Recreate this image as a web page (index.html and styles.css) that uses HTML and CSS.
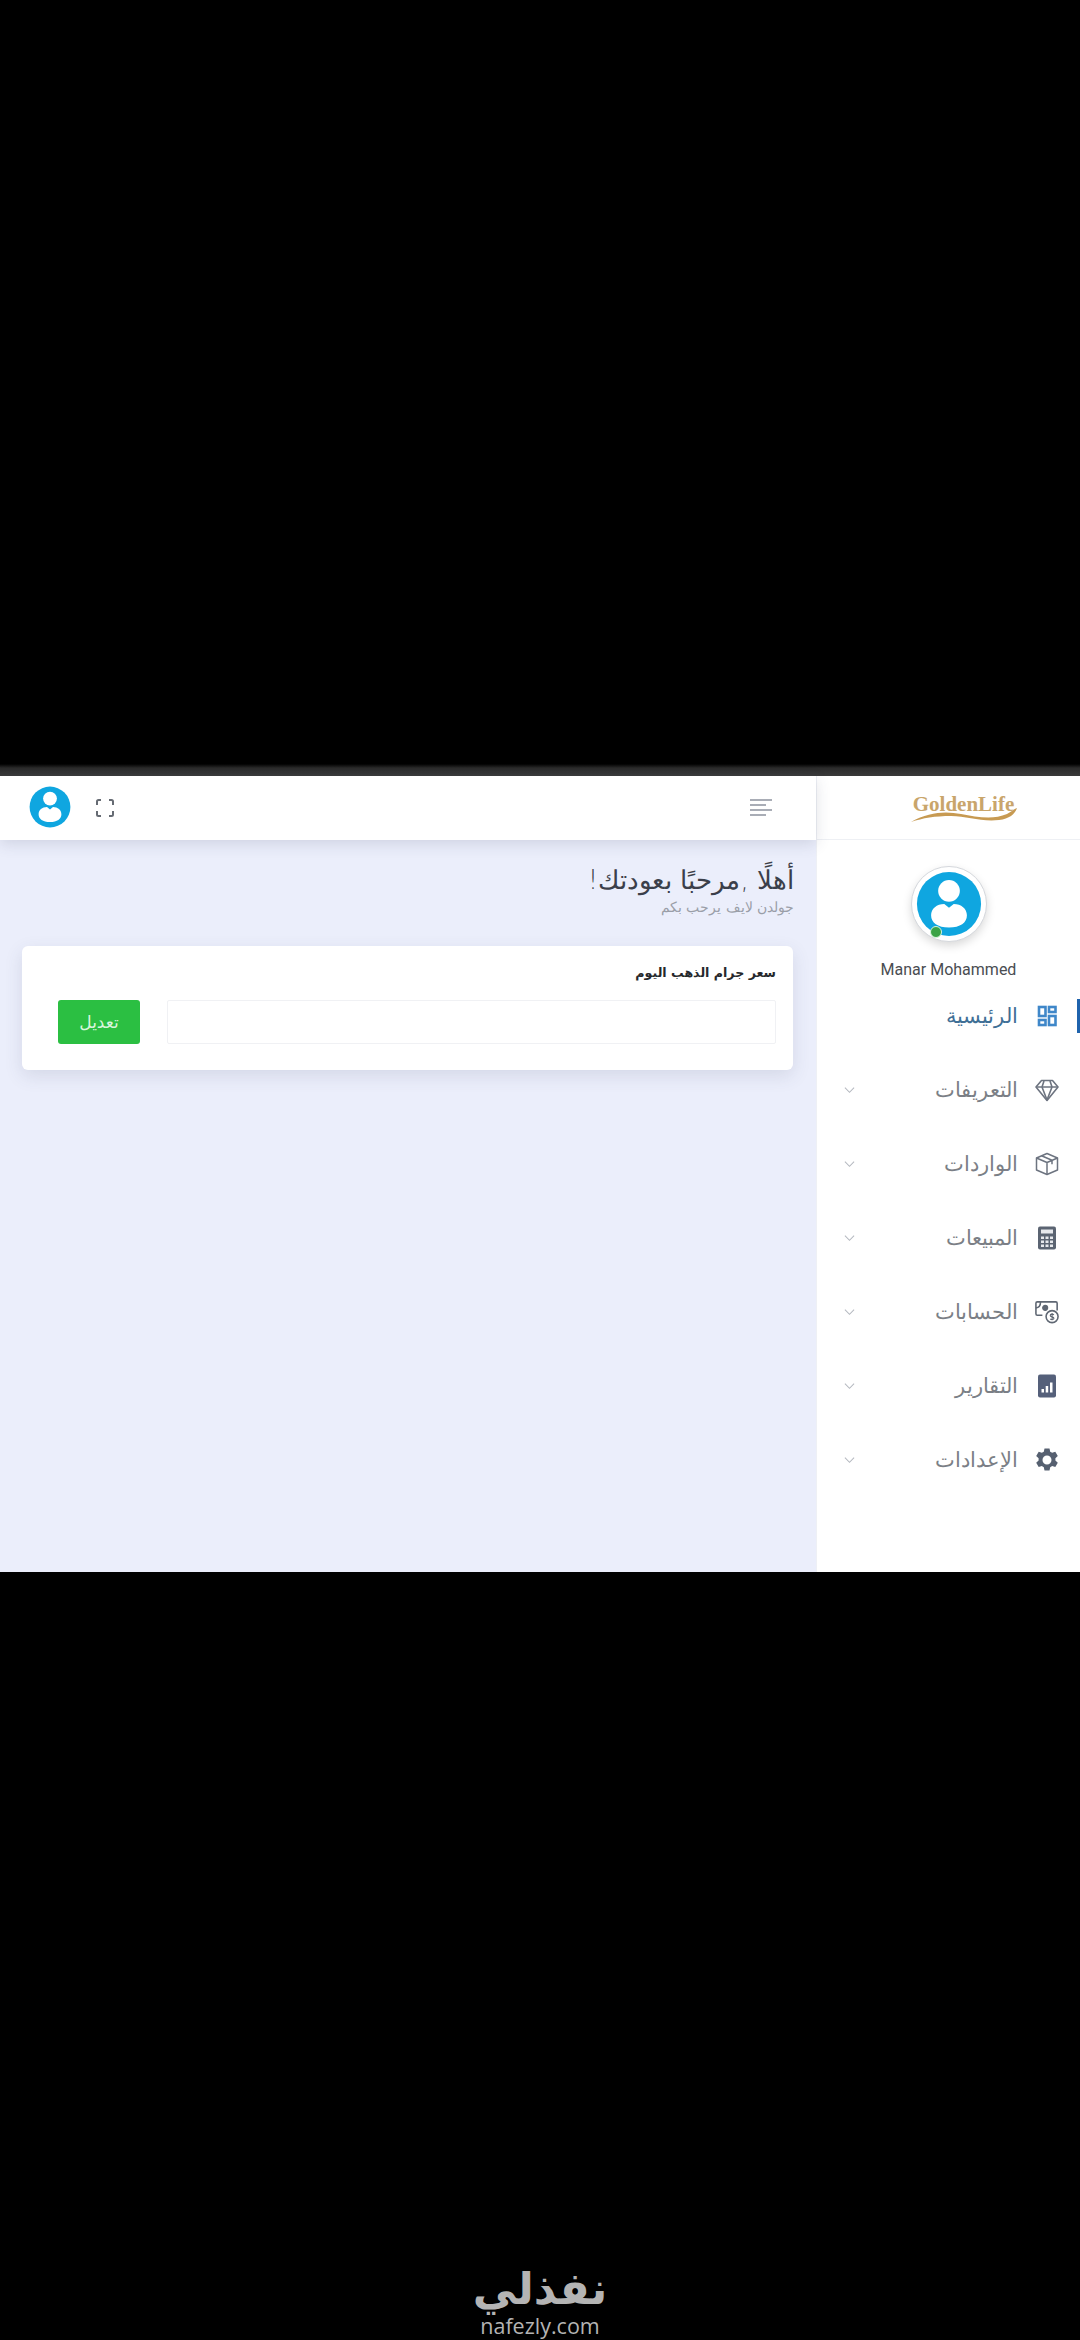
FILE: index.html
```html
<!DOCTYPE html>
<html lang="ar" dir="rtl">
<head>
    <meta charset="utf-8">
    <title>GoldenLife</title>
    <link rel="stylesheet" href="styles.css">
</head>
<body>
    <svg class="defs" width="0" height="0">
        <symbol id="avatar" viewBox="0 0 70 70">
            <circle cx="35" cy="35" r="34" fill="#0fa6e0"/>
            <circle cx="35" cy="21" r="11.5" fill="#fff"/>
            <path d="M35 39l5-4c8 0 14 5 14 12 0 8-7 13-19 13s-19-5-19-13c0-7 6-12 14-12z" fill="#fff"/>
        </symbol>
    </svg>

    <div class="top-black"></div>

    <div class="app">
        <aside class="sidebar">
            <div class="logo-box">
                <div class="logo">
                    <span class="logo-text" dir="ltr">GoldenLife</span>
                    <svg class="swoosh" viewBox="0 0 106 14" width="106" height="14">
                        <path d="M0 14C18 4 34 3 50 6c16 3 32 6 46 0 4-2 7-5 10-6-2 6-8 11-18 12C70 14 56 8 40 8 24 8 12 10 0 14z" fill="#c79a52"/>
                    </svg>
                </div>
            </div>
            <div class="profile">
                <div class="profile-pic">
                    <svg width="66" height="66"><use href="#avatar"/></svg>
                    <span class="online"></span>
                </div>
                <div class="profile-name" dir="ltr">Manar Mohammed</div>
            </div>
            <ul class="menu">
                <li class="menu-item active">
                    <svg class="menu-icon" viewBox="0 0 24 24" fill="none" stroke="#3f87c9" stroke-width="2.6">
                        <rect x="4" y="3" width="6.5" height="9"/><rect x="14" y="3" width="6.5" height="5"/>
                        <rect x="4" y="16" width="6.5" height="5"/><rect x="14" y="12" width="6.5" height="9"/>
                    </svg>
                    <span class="menu-text">الرئيسية</span>
                </li>
                <li class="menu-item">
                    <svg class="menu-icon" viewBox="0 0 24 24" fill="none" stroke="#6d7480" stroke-width="1.6" stroke-linejoin="round">
                        <path d="M6.5 2.5h11L23 9 12 22.5 1 9z"/><path d="M1.5 9h21M7 9l5 13 5-13M7 9l2-6M17 9l-2-6"/>
                    </svg>
                    <span class="menu-text">التعريفات</span>
                    <svg class="chev" viewBox="0 0 12 8"><path d="M1 1.5l5 5 5-5" fill="none" stroke="#b4b8bf" stroke-width="1.1"/></svg>
                </li>
                <li class="menu-item">
                    <svg class="menu-icon" viewBox="0 0 24 24" fill="none" stroke="#6d7480" stroke-width="1.5" stroke-linejoin="round">
                        <path d="M12 1.5l10.5 4.5v12L12 22.5 1.5 18V6z"/><path d="M1.5 6L12 10.5 22.5 6M12 10.5v12M6.5 3.8L17 8.3v4"/>
                    </svg>
                    <span class="menu-text">الواردات</span>
                    <svg class="chev" viewBox="0 0 12 8"><path d="M1 1.5l5 5 5-5" fill="none" stroke="#b4b8bf" stroke-width="1.1"/></svg>
                </li>
                <li class="menu-item">
                    <svg class="menu-icon" viewBox="0 0 24 24">
                        <rect x="3" y="0.5" width="18" height="23" rx="2" fill="#5b6472"/>
                        <rect x="6" y="3.5" width="12" height="4" fill="#e6e8ec"/>
                        <path d="M6 10.5h3v2.5H6zM10.5 10.5h3v2.5h-3zM15 10.5h3v2.5h-3zM6 14.5h3V17H6zM10.5 14.5h3V17h-3zM15 14.5h3V17h-3zM6 18.5h3V21H6zM10.5 18.5h3V21h-3zM15 18.5h3V21h-3z" fill="#e6e8ec"/>
                    </svg>
                    <span class="menu-text">المبيعات</span>
                    <svg class="chev" viewBox="0 0 12 8"><path d="M1 1.5l5 5 5-5" fill="none" stroke="#b4b8bf" stroke-width="1.1"/></svg>
                </li>
                <li class="menu-item">
                    <svg class="menu-icon" viewBox="0 0 26 25" fill="none" stroke="#5f6773" stroke-width="1.7">
                        <path d="M8 16H2.5a1.5 1.5 0 0 1-1.5-1.5V3a1.5 1.5 0 0 1 1.5-1.5h20A1.5 1.5 0 0 1 24 3v8"/>
                        <path d="M1 8c3 0 5-2 5-6.500"/>
                        <circle cx="11" cy="8" r="2.500" fill="#5f6773"/>
                        <circle cx="18.500" cy="17.500" r="6.500"/>
                        <path d="M20.500 15.500c-1-1-4-1-4 .8 0 2 4 1 4 3 0 1.700-3 1.700-4 .6M18.500 13.500v8" stroke-width="1.200"/>
                    </svg>
                    <span class="menu-text">الحسابات</span>
                    <svg class="chev" viewBox="0 0 12 8"><path d="M1 1.5l5 5 5-5" fill="none" stroke="#b4b8bf" stroke-width="1.1"/></svg>
                </li>
                <li class="menu-item">
                    <svg class="menu-icon" viewBox="0 0 24 24">
                        <rect x="3" y="0.500" width="18" height="23" rx="2" fill="#55607a"/>
                        <path d="M6.500 15h2.500v3.500H6.500zM10.700 12h2.500v6.500h-2.500zM15 8.500h2.500v10H15z" fill="#fff"/>
                    </svg>
                    <span class="menu-text">التقارير</span>
                    <svg class="chev" viewBox="0 0 12 8"><path d="M1 1.5l5 5 5-5" fill="none" stroke="#b4b8bf" stroke-width="1.1"/></svg>
                </li>
                <li class="menu-item">
                    <svg class="menu-icon" viewBox="0 0 24 24">
                        <path fill-rule="evenodd" d="M9.500 0.500h5l.7 3.200 2 1.100 3.100-1 2.500 4.300-2.400 2.200v2.300l2.400 2.200-2.500 4.300-3.100-1-2 1.100-.7 3.200h-5l-.7-3.200-2-1.100-3.100 1-2.500-4.300 2.400-2.200v-2.300L1.200 8.100l2.500-4.300 3.100 1 2-1.100zM12 7.500a4.500 4.500 0 1 0 0 9 4.500 4.500 0 0 0 0-9z" fill="#566070"/>
                    </svg>
                    <span class="menu-text">الإعدادات</span>
                    <svg class="chev" viewBox="0 0 12 8"><path d="M1 1.5l5 5 5-5" fill="none" stroke="#b4b8bf" stroke-width="1.1"/></svg>
                </li>
            </ul>
        </aside>

        <div class="content">
            <header class="topbar">
                <div class="burger"><span></span><span></span><span></span><span></span></div>
                <div class="top-left">
                    <svg class="fullscreen" viewBox="0 0 18 18" fill="none" stroke="#666b73" stroke-width="2">
                        <path d="M1 6V2.500A1.500 1.500 0 0 1 2.500 1H5M13 1h2.500A1.500 1.500 0 0 1 17 2.500V6M17 12v3.500a1.500 1.500 0 0 1-1.500 1.500H13M5 17H2.500A1.500 1.500 0 0 1 1 15.500V12"/>
                    </svg>
                    <svg width="42" height="42"><use href="#avatar"/></svg>
                </div>
            </header>
            <main class="main">
                <h1 class="welcome">أهلًا ,مرحبًا بعودتك!</h1>
                <p class="welcome-sub">جولدن لايف يرحب بكم</p>
                <section class="card">
                    <h2 class="card-title">سعر جرام الذهب اليوم</h2>
                    <form class="price-form">
                        <input class="price-input" type="text">
                        <button class="btn-edit" type="button">تعديل</button>
                    </form>
                </section>
            </main>
        </div>
    </div>

    <footer class="bottom-black">
        <div class="mark-ar">نفذلي</div>
        <div class="mark-en" dir="ltr">nafezly.com</div>
    </footer>
</body>
</html>
```

FILE: styles.css
```css
* {
    margin: 0;
    padding: 0;
    box-sizing: border-box;
}
body {
    font-family: "DejaVu Sans", sans-serif;
    font-weight: 200;
    background: #000;
    height: 2340px;
    display: flex;
    flex-direction: column;
    overflow: hidden;
}
.defs {
    position: absolute;
}
.top-black {
    height: 776px;
    background: linear-gradient(#000 764px, #2b2b2b 768px, #3a3a3a 776px);
}
.app {
    height: 796px;
    display: flex;
    background: #fff;
}
.sidebar {
    width: 264px;
    background: #fff;
    border-left: 1px solid #eef0f5;
}
.logo-box {
    height: 64px;
    display: flex;
    justify-content: center;
    align-items: center;
    padding-left: 30px;
    border-bottom: 1px solid #eef0f4;
}
.logo {
    display: flex;
    flex-direction: column;
    align-items: center;
    width: 106px;
}
.logo-text {
    font-family: "Liberation Serif", serif;
    font-weight: bold;
    font-size: 21px;
    line-height: 21px;
    color: #c9a56b;
}
.swoosh {
    margin-top: -7px;
}
.profile {
    height: 146px;
    display: flex;
    flex-direction: column;
    align-items: center;
    padding-top: 26px;
}
.profile-pic {
    position: relative;
    width: 76px;
    height: 76px;
    padding: 4px;
    border-radius: 50%;
    background: #fff;
    border: 1px solid #d5d8dd;
    box-shadow: 0 4px 10px rgba(0, 0, 0, 0.15);
}
.online {
    position: absolute;
    left: 18px;
    bottom: 3px;
    width: 12px;
    height: 12px;
    border-radius: 50%;
    background: #3aa346;
    border: 1.5px solid #d8f5df;
}
.profile-name {
    margin-top: 18px;
    font-family: Roboto, sans-serif;
    font-weight: 400;
    font-size: 16px;
    color: #4a4d52;
}
.menu {
    list-style: none;
}
.menu-item {
    position: relative;
    height: 74px;
    display: flex;
    align-items: center;
    padding-right: 21px;
    padding-left: 27px;
    color: #7b7f86;
    font-size: 20.8px;
}
.menu-item:first-child {
    height: 60px;
    margin-bottom: 7px;
}
.menu-item.active {
    color: #3f6f96;
}
.menu-item.active::after {
    content: "";
    position: absolute;
    right: 0;
    top: 13px;
    width: 3px;
    height: 34px;
    background: #1f63ad;
}
.menu-icon {
    width: 24px;
    height: 24px;
    flex: none;
}
.menu-text {
    margin-right: 17px;
}
.chev {
    width: 11px;
    height: 8px;
    margin-right: auto;
}
.content {
    flex: 1;
    display: flex;
    flex-direction: column;
}
.topbar {
    height: 64px;
    background: #fff;
    display: flex;
    justify-content: space-between;
    align-items: center;
    padding: 0 44px 0 29px;
    box-shadow: 0 4px 14px rgba(60, 70, 100, 0.16);
    position: relative;
}
.burger {
    width: 22px;
    display: flex;
    flex-direction: column;
    gap: 3px;
    margin-top: -2px;
}
.burger span {
    height: 2px;
    background: #a9adb6;
}
.burger span:nth-child(even) {
    width: 16px;
    align-self: flex-end;
}
.top-left {
    display: flex;
    align-items: center;
    gap: 25px;
    margin-top: -2px;
}
.fullscreen {
    width: 18px;
    height: 18px;
    margin-top: 2px;
}
.main {
    flex: 1;
    background: #ebeefb;
    padding: 24px 22px 0 22px;
}
.welcome {
    font-size: 26px;
    line-height: 32px;
    font-weight: 200;
    color: #3b3f4a;
}
.welcome-sub {
    margin-top: 2px;
    font-size: 13.8px;
    line-height: 18px;
    color: #9a9ea8;
}
.card {
    margin: 30px 1px 0 0;
    height: 124px;
    background: #fff;
    border-radius: 6px;
    padding: 15px 17px 0 36px;
    box-shadow: 0 6px 18px rgba(60, 70, 100, 0.13);
}
.card-title {
    font-size: 12.6px;
    line-height: 24px;
    font-weight: 700;
    color: #26282c;
}
.price-form {
    display: flex;
    gap: 27px;
    margin-top: 15px;
}
.price-input {
    flex: 1;
    height: 44px;
    border: 1px solid #f0f1f4;
    border-radius: 2px;
    background: #fff;
}
.btn-edit {
    width: 82px;
    height: 44px;
    background: #2bbf42;
    border: none;
    border-radius: 3px;
    color: #d8f5dc;
    font-family: "DejaVu Sans", sans-serif;
    font-size: 17px;
}
.bottom-black {
    flex: 1;
    display: flex;
    flex-direction: column;
    align-items: center;
    justify-content: flex-end;
    color: #b4b4b4;
}
.mark-ar {
    font-size: 44px;
    line-height: 46px;
    font-weight: 700;
}
.mark-en {
    font-family: "Open Sans", sans-serif;
    font-weight: 500;
    font-size: 21.5px;
    line-height: 28px;
}
```
